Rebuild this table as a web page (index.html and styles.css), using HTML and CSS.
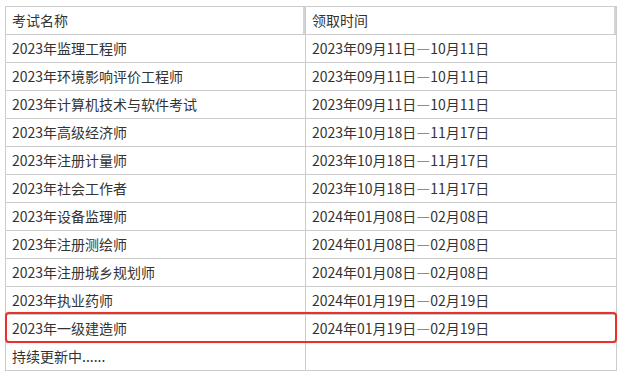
FILE: index.html
```html
<!DOCTYPE html>
<html lang="zh-CN">
<head>
<meta charset="utf-8">
<link rel="stylesheet" href="styles.css">
</head>
<body>
<div class="wrap">
  <table class="tbl">
    <colgroup><col class="c1"><col class="c2"></colgroup>
    <thead>
      <tr><th>考试名称</th><th>领取时间</th></tr>
    </thead>
    <tbody>
      <tr><td>2023年监理工程师</td><td>2023年09月11日—10月11日</td></tr>
      <tr><td>2023年环境影响评价工程师</td><td>2023年09月11日—10月11日</td></tr>
      <tr><td>2023年计算机技术与软件考试</td><td>2023年09月11日—10月11日</td></tr>
      <tr><td>2023年高级经济师</td><td>2023年10月18日—11月17日</td></tr>
      <tr><td>2023年注册计量师</td><td>2023年10月18日—11月17日</td></tr>
      <tr><td>2023年社会工作者</td><td>2023年10月18日—11月17日</td></tr>
      <tr><td>2023年设备监理师</td><td>2024年01月08日—02月08日</td></tr>
      <tr><td>2023年注册测绘师</td><td>2024年01月08日—02月08日</td></tr>
      <tr><td>2023年注册城乡规划师</td><td>2024年01月08日—02月08日</td></tr>
      <tr><td>2023年执业药师</td><td>2024年01月19日—02月19日</td></tr>
      <tr><td>2023年一级建造师</td><td>2024年01月19日—02月19日</td></tr>
      <tr><td>持续更新中......</td><td></td></tr>
    </tbody>
  </table>
  <div class="mark"></div>
</div>
</body>
</html>
```

FILE: styles.css
```css
html, body {
  margin: 0;
  padding: 0;
  background: #ffffff;
}
body {
  font-family: "Noto Sans CJK SC", "Microsoft YaHei", sans-serif;
  font-size: 14px;
  color: #333333;
}
.wrap {
  position: relative;
  width: 611px;
  margin: 6px 0 0 5px;
}
.tbl {
  border-collapse: collapse;
  table-layout: fixed;
  width: 611px;
}
.c1 { width: 300px; }
.c2 { width: 311px; }
.tbl th,
.tbl td {
  border: 1px solid #cccccc;
  height: 27px;
  padding: 0 6px;
  text-align: left;
  font-weight: normal;
  line-height: 27px;
  white-space: nowrap;
  box-sizing: border-box;
}
.tbl th {
  box-shadow: inset -2px 0 0 #d4d4d4;
}
.mark {
  position: absolute;
  left: 0;
  top: 306px;
  width: 612px;
  height: 31px;
  box-sizing: border-box;
  border: 2.5px solid #e8312b;
  border-radius: 4px;
  box-shadow: 0 0 1px rgba(232, 49, 43, 0.6);
}
```
